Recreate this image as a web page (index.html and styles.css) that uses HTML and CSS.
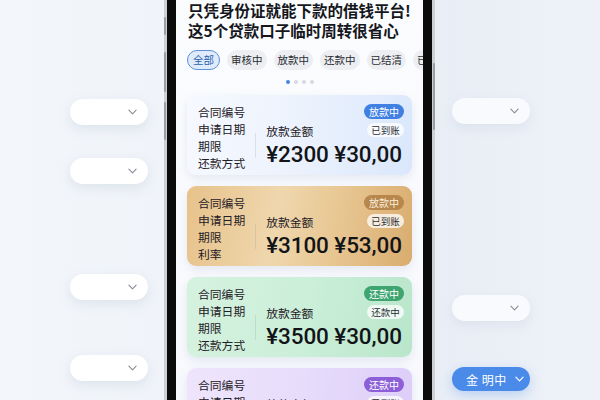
FILE: index.html
```html
<!DOCTYPE html>
<html lang="zh-CN">
<head>
<meta charset="utf-8">
<title>借钱平台</title>
<link rel="stylesheet" href="styles.css">
</head>
<body>
<div class="side side-left">
  <div class="fpill p1"><svg class="chev" viewBox="0 0 10 6"><polyline points="1,1 5,5 9,1"/></svg></div>
  <div class="fpill p2"><svg class="chev" viewBox="0 0 10 6"><polyline points="1,1 5,5 9,1"/></svg></div>
  <div class="fpill p3"><svg class="chev" viewBox="0 0 10 6"><polyline points="1,1 5,5 9,1"/></svg></div>
  <div class="fpill p4"><svg class="chev" viewBox="0 0 10 6"><polyline points="1,1 5,5 9,1"/></svg></div>
</div>

<div class="phone">
  <span class="btn b1"></span><span class="btn b2"></span><span class="btn b3"></span><span class="btn b4"></span>
  <div class="bezel">
    <div class="screen">
      <h1 class="title">只凭身份证就能下款的借钱平台!<br>这5个贷款口子临时周转很省心</h1>
      <div class="tabs">
        <span class="tab active">全部</span>
        <span class="tab">审核中</span>
        <span class="tab">放款中</span>
        <span class="tab">还款中</span>
        <span class="tab">已结清</span>
        <span class="tab">已逾期</span>
      </div>
      <div class="dots"><i class="on"></i><i></i><i></i><i></i></div>

      <div class="card blue">
        <div class="labels"><div>合同编号</div><div>申请日期</div><div>期限</div><div>还款方式</div></div>
        <div class="divider"></div>
        <div class="info">
          <div class="row1"><span class="badge">放款中</span></div>
          <div class="row2"><span class="lbl">放款金额</span><span class="sub">已到账</span></div>
          <div class="amount">¥2300 ¥30,00</div>
        </div>
      </div>

      <div class="card gold">
        <div class="labels"><div>合同编号</div><div>申请日期</div><div>期限</div><div>利率</div></div>
        <div class="divider"></div>
        <div class="info">
          <div class="row1"><span class="badge">放款中</span></div>
          <div class="row2"><span class="lbl">放款金额</span><span class="sub">已到账</span></div>
          <div class="amount">¥3100 ¥53,00</div>
        </div>
      </div>

      <div class="card green">
        <div class="labels"><div>合同编号</div><div>申请日期</div><div>期限</div><div>还款方式</div></div>
        <div class="divider"></div>
        <div class="info">
          <div class="row1"><span class="badge">还款中</span></div>
          <div class="row2"><span class="lbl">放款金额</span><span class="sub">还款中</span></div>
          <div class="amount">¥3500 ¥30,00</div>
        </div>
      </div>

      <div class="card purple">
        <div class="labels"><div>合同编号</div><div>申请日期</div><div>期限</div><div>还款方式</div></div>
        <div class="divider"></div>
        <div class="info">
          <div class="row1"><span class="badge">还款中</span></div>
          <div class="row2"><span class="lbl">放款金额</span><span class="sub">已到账</span></div>
          <div class="amount">¥2800 ¥20,00</div>
        </div>
      </div>
    </div>
  </div>
</div>

<div class="side side-right">
  <div class="fpill ghost r1"><svg class="chev" viewBox="0 0 10 6"><polyline points="1,1 5,5 9,1"/></svg></div>
  <div class="fpill ghost r2"><svg class="chev" viewBox="0 0 10 6"><polyline points="1,1 5,5 9,1"/></svg></div>
  <div class="fpill primary r3"><span class="ptext">金 明中</span><svg class="chev" viewBox="0 0 10 6"><polyline points="1,1 5,5 9,1"/></svg></div>
</div>
</body>
</html>
```

FILE: styles.css
```css
* { box-sizing: border-box; margin: 0; padding: 0; }

html, body { width: 600px; height: 400px; overflow: hidden; }

body {
  display: flex;
  font-family: "Noto Sans CJK SC", "Noto Sans", sans-serif;
  background: linear-gradient(90deg, #f3f6fa 0%, #eef2f8 40%, #e9eef6 75%, #eef2f8 100%);
  color: #1c1f26;
}

/* floating side pills */
.side { display: flex; flex-direction: column; }
.side-left { width: 164px; padding-left: 70px; padding-top: 99px; }
.side-right { flex: 1; padding-left: 17px; padding-top: 98px; }

.fpill {
  width: 78px;
  height: 26px;
  border-radius: 13px;
  background: #ffffff;
  box-shadow: 0 4px 12px rgba(120, 140, 175, 0.16);
  display: flex;
  align-items: center;
  justify-content: flex-end;
  padding-right: 11px;
}
.fpill.ghost { background: rgba(250, 252, 255, 0.85); box-shadow: 0 4px 12px rgba(120, 140, 175, 0.12); }
.p2 { margin-top: 33px; }
.p3 { margin-top: 90px; }
.p4 { margin-top: 55px; }
.r2 { margin-top: 171px; }
.r3 { margin-top: 46px; height: 24px; }

.chev { width: 9px; height: 6px; fill: none; stroke: #8a8f98; stroke-width: 1.3; stroke-linecap: round; stroke-linejoin: round; }

.fpill.primary {
  background: #4a8ae8;
  justify-content: flex-start;
  padding-left: 14px;
  padding-right: 0;
  gap: 8px;
  box-shadow: 0 4px 12px rgba(74, 138, 232, 0.3);
}
.ptext { color: #fff; font-size: 12px; letter-spacing: 0.5px; }
.primary .chev { stroke: #fff; }

/* phone */
.phone {
  position: relative;
  width: 271px;
  height: 400px;
  flex: none;
  border-left: 3px solid #cdd0d5;
  border-right: 3px solid #cdd0d5;
  background: #0b0b0c;
}
.btn { position: absolute; width: 2px; background: #9a9da3; border-radius: 1px; }
.b1 { left: -3px; top: 17px; height: 18px; }
.b2 { left: -3px; top: 52px; height: 40px; }
.b3 { left: -3px; top: 102px; height: 38px; }
.b4 { right: -3px; top: 63px; height: 67px; }

.bezel { height: 100%; padding: 0 9px; }
.screen {
  height: 100%;
  background: linear-gradient(180deg, #fbfcfe 0%, #f7f9fd 100%);
  overflow: hidden;
  padding: 0 11px;
}

.title {
  font-size: 15.5px;
  line-height: 20px;
  font-weight: 600;
  color: #15171c;
  white-space: nowrap;
  padding-left: 1px;
}

.tabs {
  display: flex;
  gap: 7px;
  margin-top: 10px;
  white-space: nowrap;
}
.tab {
  flex: none;
  height: 20px;
  line-height: 20px;
  padding: 0 4px;
  border-radius: 10px;
  background: #eceef1;
  font-size: 10.5px;
  color: #2a2d33;
}
.tab.active {
  background: #dfeafb;
  border: 1px solid #5d8fda;
  line-height: 18px;
  padding: 0 5px;
  color: #2c5fae;
}

.dots { display: flex; justify-content: center; gap: 4px; margin-top: 10px; height: 4px; }
.dots i { width: 4px; height: 4px; border-radius: 50%; background: #d6d9de; }
.dots i.on { background: #4a86e0; }

.card {
  margin-top: 11px;
  height: 80px;
  border-radius: 9px;
  display: grid;
  grid-template-columns: auto 1px 1fr;
  column-gap: 10px;
  padding: 8px 8px 0 11px;
  box-shadow: 0 4px 10px rgba(90, 110, 150, 0.12);
}
.card + .card { margin-top: 11px; }

.blue { background: linear-gradient(100deg, #f6f9ff 0%, #edf3fd 45%, #dae7fb 100%); }
.gold { background: linear-gradient(100deg, #e7c28b 0%, #efd7ad 40%, #e8c793 65%, #d9ac6e 100%); }
.green { background: linear-gradient(100deg, #d5f2df 0%, #ccefd9 50%, #b9e6cb 100%); }
.purple { background: linear-gradient(100deg, #eee5fc 0%, #e7dcfb 50%, #dccdf8 100%); }

.labels { font-size: 11.8px; line-height: 17px; color: #1e2026; }

.divider { margin-top: 30px; height: 25px; background: rgba(120, 130, 150, 0.18); }

.info { display: flex; flex-direction: column; padding-left: 0; }
.row1 { display: flex; justify-content: flex-end; padding-top: 1px; }
.badge {
  width: 40px;
  height: 15px;
  border-radius: 8px;
  font-size: 10px;
  line-height: 15px;
  text-align: center;
  color: #fff;
}
.blue .badge { background: #3f80e2; }
.gold .badge { background: #b7874d; color: #fbeed8; }
.green .badge { background: #3ea470; }
.purple .badge { background: #8c5fd8; }

.row2 { display: flex; justify-content: space-between; align-items: center; margin-top: 4px; height: 14px; }
.lbl { font-size: 11.8px; color: #1e2026; }
.sub {
  width: 37px;
  height: 14px;
  line-height: 14px;
  border-radius: 7px;
  font-size: 9.5px;
  text-align: center;
  background: rgba(255, 255, 255, 0.75);
  color: #2a2d33;
}

.amount {
  margin-top: 5px;
  font-family: Roboto, "Noto Sans", sans-serif;
  font-weight: 500;
  font-size: 22.5px;
  line-height: 25px;
  color: #121418;
  white-space: nowrap;
  letter-spacing: -0.1px;
}
```
